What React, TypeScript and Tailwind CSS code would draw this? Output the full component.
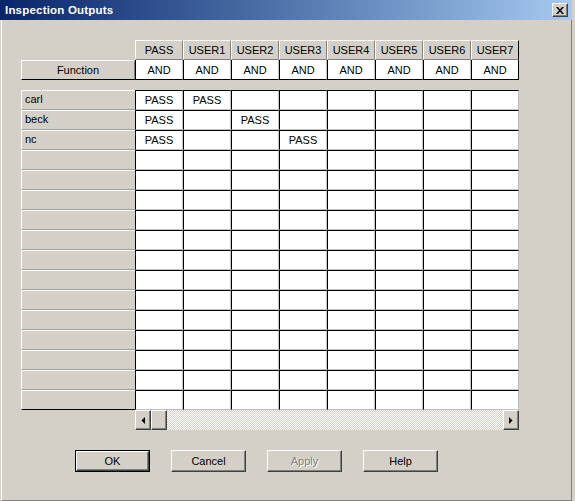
import React from 'react';

const columns = ['PASS', 'USER1', 'USER2', 'USER3', 'USER4', 'USER5', 'USER6', 'USER7'];

const rows: { label: string; values: string[] }[] = [
    { label: 'carl', values: ['PASS', 'PASS'] },
    { label: 'beck', values: ['PASS', '', 'PASS'] },
    { label: 'nc', values: ['PASS', '', '', 'PASS'] },
    ...Array.from({ length: 13 }, () => ({ label: '', values: [] as string[] })),
];

// classic raised 3D edge
const raised = 'border border-t-white border-l-white border-r-[#404040] border-b-[#404040] shadow-[inset_-1px_-1px_0_#808080]';

function DialogButton({ label, isDefault, disabled }: { label: string; isDefault?: boolean; disabled?: boolean }) {
    return (
        <div className={`w-[75px] h-[22px] ${isDefault ? 'border border-black' : ''}`}>
            <div className={`w-full h-full flex items-center justify-center bg-[#D4D0C8] ${raised}`}>
                <span className={disabled ? 'text-[#808080] [text-shadow:1px_1px_0_#fff]' : 'text-black'}>{label}</span>
            </div>
        </div>
    );
}

function ArrowButton({ dir }: { dir: 'left' | 'right' }) {
    return (
        <div className={`w-[16px] h-[20px] flex items-center justify-center bg-[#D4D0C8] ${raised}`}>
            <svg width="4" height="7" viewBox="0 0 4 7">
                {dir === 'left' ? <polygon points="4,0 4,7 0.5,3.5" fill="#000" /> : <polygon points="0,0 0,7 3.5,3.5" fill="#000" />}
            </svg>
        </div>
    );
}

export default function App() {
    return (
        <div className="w-[575px] h-[501px] bg-[#D4D0C8] overflow-hidden text-[11px] leading-[14px] text-black" style={{ fontFamily: '"Liberation Sans", Arial, sans-serif' }}>
            {/* Title bar */}
            <div className="w-[572px] h-[20px] flex items-center justify-between pl-[5px] pr-[4px] bg-gradient-to-r from-[#0A246A] to-[#A6CAF0]">
                <span className="text-white font-bold text-[11.5px] tracking-[0.2px]">Inspection Outputs</span>
                <div className={`w-[16px] h-[14px] flex items-center justify-center bg-[#D4D0C8] ${raised}`}>
                    <svg width="8" height="7" viewBox="0 0 8 7">
                        <path d="M0 0 L2 0 L4 2.5 L6 0 L8 0 L5 3.5 L8 7 L6 7 L4 4.5 L2 7 L0 7 L3 3.5 Z" fill="#000" />
                    </svg>
                </div>
            </div>

            {/* Body */}
            <div className="ml-[1px] w-[571px] h-[481px] border-l border-l-white border-r border-r-[#808080] border-b border-b-[#808080] pt-[20px] pl-[19px]">
                {/* Column headers */}
                <div className="flex h-[20px]">
                    <div className="w-[114px]" />
                    {columns.map((c, i) => (
                        <div
                            key={c}
                            className={`w-[48px] h-[20px] flex items-center justify-center bg-[#D4D0C8] border-t border-l border-t-white border-l-white border-b border-b-[#808080] ${i === columns.length - 1 ? 'border-r border-r-black' : 'border-r border-r-[#808080]'}`}
                        >
                            {c}
                        </div>
                    ))}
                </div>

                {/* Function row */}
                <div className="flex h-[20px]">
                    <div className="w-[114px] h-[20px] flex items-center justify-center bg-[#D4D0C8] border-t border-l border-t-white border-l-white border-b border-b-black border-r border-r-[#808080]">
                        Function
                    </div>
                    {columns.map((c, i) => (
                        <div
                            key={c}
                            className={`w-[48px] h-[20px] flex items-center justify-center bg-white border-l border-l-black border-b border-b-black ${i === columns.length - 1 ? 'border-r border-r-black' : 'border-r border-r-[#c0c0c0]'}`}
                        >
                            AND
                        </div>
                    ))}
                </div>

                {/* Data rows */}
                <div className="mt-[10px] flex flex-col">
                    {rows.map((r, ri) => (
                        <div key={ri} className="flex h-[20px]">
                            <div className={`w-[114px] h-[20px] pl-[3px] pt-[1px] bg-[#D4D0C8] border-t border-l border-t-white border-l-white ${ri === rows.length - 1 ? 'border-b border-b-black' : 'border-b border-b-[#a0a0a0]'}`}>
                                {r.label}
                            </div>
                            {columns.map((c, ci) => (
                                <div
                                    key={c}
                                    className="w-[48px] h-[20px] flex items-center justify-center bg-white border-t border-l border-t-black border-l-black border-r border-b border-r-[#c0c0c0] border-b-[#c0c0c0]"
                                >
                                    {r.values[ci] ?? ''}
                                </div>
                            ))}
                        </div>
                    ))}
                </div>

                {/* Horizontal scrollbar */}
                <div className="flex h-[20px]">
                    <div className="w-[114px]" />
                    <div className="w-[384px] h-[20px] flex">
                        <ArrowButton dir="left" />
                        <div className={`w-[16px] h-[20px] bg-[#D4D0C8] ${raised}`} />
                        <div className="flex-1 h-[20px] bg-[repeating-conic-gradient(#ffffff_0%_25%,#d4d0c8_0%_50%)] bg-[length:2px_2px]" />
                        <ArrowButton dir="right" />
                    </div>
                </div>

                {/* Buttons */}
                <div className="mt-[20px] ml-[54px] flex gap-[21px]">
                    <DialogButton label="OK" isDefault />
                    <DialogButton label="Cancel" />
                    <DialogButton label="Apply" disabled />
                    <DialogButton label="Help" />
                </div>
            </div>
        </div>
    );
}
